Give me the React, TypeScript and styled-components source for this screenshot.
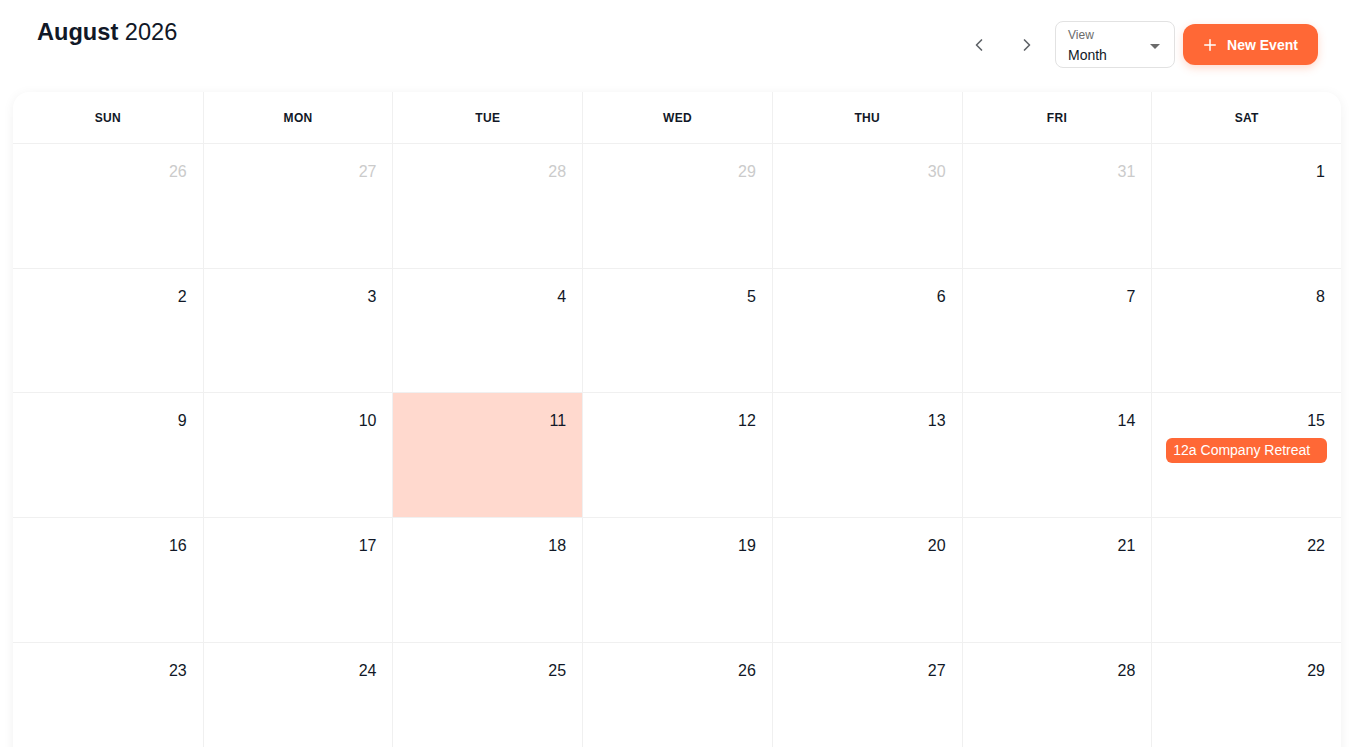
import React from "react";
import styled, { createGlobalStyle } from "styled-components";
import { ChevronLeft, ChevronRight, Plus } from "lucide-react";

const GlobalStyle = createGlobalStyle`
  * { box-sizing: border-box; }
  body {
    margin: 0;
    background: #ffffff;
    font-family: "Liberation Sans", Arial, sans-serif;
    color: #111827;
  }
`;

const DAYS = ["SUN", "MON", "TUE", "WED", "THU", "FRI", "SAT"];

type Cell = { day: number; inMonth: boolean; today?: boolean; events?: string[] };

function buildWeeks(): Cell[][] {
  const cells: Cell[] = [];
  for (let d = 26; d <= 31; d++) cells.push({ day: d, inMonth: false });
  for (let d = 1; d <= 31; d++) {
    cells.push({
      day: d,
      inMonth: true,
      today: d === 11,
      events: d === 15 ? ["12a Company Retreat"] : undefined,
    });
  }
  let next = 1;
  while (cells.length % 7 !== 0) cells.push({ day: next++, inMonth: false });
  const weeks: Cell[][] = [];
  for (let i = 0; i < cells.length; i += 7) weeks.push(cells.slice(i, i + 7));
  return weeks;
}

export default function App() {
  const weeks = buildWeeks();

  return (
    <>
      <GlobalStyle />
      <Page>
        <Header>
          <Title>
            <strong>August</strong> 2026
          </Title>
          <Controls>
            <NavButton aria-label="Previous month">
              <ChevronLeft size={20} strokeWidth={2} />
            </NavButton>
            <NavButton aria-label="Next month">
              <ChevronRight size={20} strokeWidth={2} />
            </NavButton>
            <ViewSelect>
              <SelectText>
                <SelectLabel>View</SelectLabel>
                <SelectValue>Month</SelectValue>
              </SelectText>
              <svg width="24" height="24" viewBox="0 0 24 24">
                <path d="M7 10l5 5 5-5z" fill="#6b6b6b" />
              </svg>
            </ViewSelect>
            <NewEventButton>
              <Plus size={18} strokeWidth={2} />
              New Event
            </NewEventButton>
          </Controls>
        </Header>

        <Card>
          <WeekHeader>
            {DAYS.map((d) => (
              <DayName key={d}>{d}</DayName>
            ))}
          </WeekHeader>
          {weeks.map((week, wi) => (
            <WeekRow key={wi}>
              {week.map((cell, ci) => (
                <DayCell key={ci} $today={cell.today}>
                  <DayNumber $muted={!cell.inMonth}>{cell.day}</DayNumber>
                  {cell.events?.map((ev) => (
                    <EventChip key={ev}>{ev}</EventChip>
                  ))}
                </DayCell>
              ))}
            </WeekRow>
          ))}
        </Card>
      </Page>
    </>
  );
}

const Page = styled.div`
  padding: 16px 18px 0 13px;
`;

const Header = styled.header`
  display: flex;
  justify-content: space-between;
  align-items: flex-start;
  padding: 0 23px 0 24px;
`;

const Title = styled.h1`
  margin: 0;
  font-size: 23.6px;
  line-height: 32px;
  font-weight: 400;
  color: #111827;

  strong {
    font-weight: 700;
  }
`;

const Controls = styled.div`
  display: flex;
  align-items: center;
  gap: 8px;
  margin-top: 5px;
`;

const NavButton = styled.button`
  width: 40px;
  height: 40px;
  display: flex;
  align-items: center;
  justify-content: center;
  border: none;
  background: transparent;
  border-radius: 50%;
  color: #5f6368;
  cursor: pointer;
  padding: 0;
`;

const ViewSelect = styled.div`
  width: 120px;
  height: 47px;
  border: 1px solid #e2e2e2;
  border-radius: 8px;
  display: flex;
  align-items: center;
  justify-content: space-between;
  padding: 2px 7px 0 12px;
`;

const SelectText = styled.div`
  display: flex;
  flex-direction: column;
  gap: 4px;
`;

const SelectLabel = styled.span`
  font-size: 12px;
  line-height: 14px;
  color: #6b6b6b;
`;

const SelectValue = styled.span`
  font-size: 14px;
  line-height: 18px;
  color: #111827;
`;

const NewEventButton = styled.button`
  height: 41px;
  width: 135px;
  display: flex;
  align-items: center;
  justify-content: center;
  gap: 8px;
  padding: 0 18px 0 16px;
  border: none;
  border-radius: 12px;
  background: #ff6836;
  color: #ffffff;
  font-family: inherit;
  font-size: 14px;
  font-weight: 700;
  box-shadow: 0 3px 8px rgba(255, 104, 54, 0.25);
  cursor: pointer;
`;

const Card = styled.section`
  margin-top: 24px;
  background: #ffffff;
  border-radius: 16px;
  box-shadow: 0 2px 12px rgba(0, 0, 0, 0.06);
  overflow: hidden;
`;

const WeekHeader = styled.div`
  display: grid;
  grid-template-columns: repeat(7, 1fr);
  height: 52px;
  border-bottom: 1px solid #f0f0f0;
`;

const DayName = styled.div`
  display: flex;
  align-items: center;
  justify-content: center;
  font-size: 12px;
  font-weight: 700;
  letter-spacing: 0.3px;
  color: #111827;
  border-left: 1px solid #f0f0f0;

  &:first-child {
    border-left: none;
  }
`;

const WeekRow = styled.div`
  display: grid;
  grid-template-columns: repeat(7, 1fr);
  height: 124.7px;
  border-bottom: 1px solid #f0f0f0;
`;

const DayCell = styled.div<{ $today?: boolean }>`
  display: flex;
  flex-direction: column;
  align-items: stretch;
  padding: 16px 14px 0 14px;
  background: ${(p) => (p.$today ? "#ffd9ce" : "transparent")};
  border-left: 1px solid #f0f0f0;

  &:first-child {
    border-left: none;
  }
`;

const DayNumber = styled.div<{ $muted?: boolean }>`
  text-align: right;
  font-size: 16px;
  line-height: 24px;
  padding-right: 2px;
  color: ${(p) => (p.$muted ? "#cbcbcb" : "#111827")};
`;

const EventChip = styled.div`
  margin-top: 5px;
  height: 25px;
  line-height: 25px;
  padding: 0 7px;
  border-radius: 6px;
  background: #ff6836;
  color: #ffffff;
  font-size: 14px;
  white-space: nowrap;
  overflow: hidden;
`;
